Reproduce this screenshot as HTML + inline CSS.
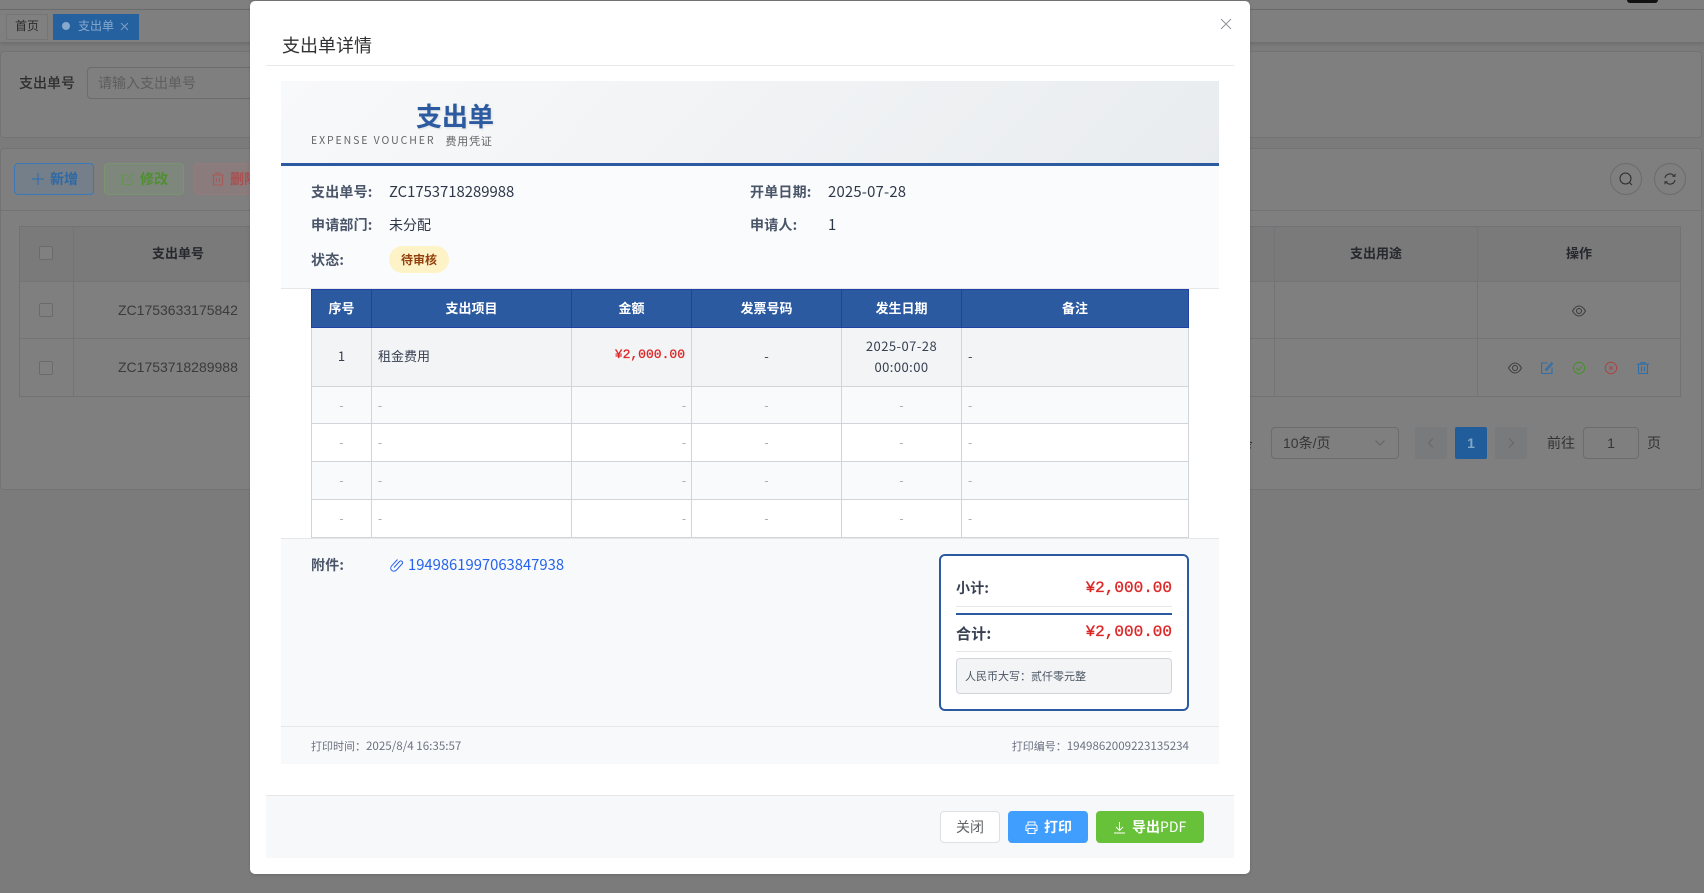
<!DOCTYPE html>
<html lang="zh">
<head>
<meta charset="utf-8">
<title>支出单详情</title>
<style>
*{box-sizing:border-box}
html,body{margin:0;padding:0;width:1704px;height:893px;overflow:hidden;background:#7b7b7b}
body{position:relative;font-family:"Liberation Sans","Noto Sans CJK SC",sans-serif;font-size:14px}
.a{position:absolute}
.t{position:absolute;white-space:nowrap}
.n{font-family:"Noto Sans CJK SC","Liberation Sans",sans-serif}
.c{font-family:"Noto Sans CJK TC",sans-serif}
.d{font-size:11.6px}
svg{position:absolute;display:block;overflow:visible;fill:none}
.card{position:absolute;background:#7f7f7f;border:1px solid #737373;border-radius:4px}
.bline{position:absolute;background:#747476}
.hc{color:#26282e;font-weight:bold;line-height:20px;text-align:center;font-family:"Noto Sans CJK SC",sans-serif;font-size:13px}
.cb{position:absolute;width:14px;height:14px;border:1px solid #6b6b6b;border-radius:2px;background:#808080}
.lb{position:absolute;white-space:nowrap;font:bold 14px/20px "Noto Sans CJK SC",sans-serif;color:#4a5568;letter-spacing:.2px}
.vl{position:absolute;white-space:nowrap;font:400 14px/20px "Noto Sans CJK SC",sans-serif;color:#2d3748}
table{position:absolute;left:311px;top:289px;border-collapse:collapse;table-layout:fixed;width:877px;font-family:"Noto Sans CJK SC",sans-serif}
th{background:#2b5aa0;color:#fff;font-size:13px;font-weight:bold;border:1px solid #2140a6;height:38px;padding:0 0 2px;line-height:18px}
td{border:1px solid #d1d5db;font-size:13px;color:#374151;text-align:center;padding:0 5px 3px;line-height:21px}
td.l{text-align:left;padding-left:6px}
td.r{text-align:right}
.e td{color:#9ca3af;height:38px;font-size:12px;padding-bottom:0}
.e.s td{height:37px}
.g{background:#f9fafb}
.w{background:#fff}
.btn{position:absolute;top:811px;height:32px;border-radius:4px;font:bold 14px/32px "Noto Sans CJK SC",sans-serif;color:#fff}
.amt{position:absolute;white-space:nowrap;font:400 16px/20px "Liberation Mono",monospace;color:#dc2626;right:532px;-webkit-text-stroke:.35px #dc2626}
</style>
</head>
<body>
<!-- background page -->
<div class="a" style="left:0;top:0;width:1704px;height:10px;background:#7f7f7f;border-bottom:1px solid #6d6d6d"></div>
<div class="a" style="left:1627px;top:0;width:31px;height:3px;background:#111;border-radius:0 0 12px 12px"></div>
<div class="a" style="left:0;top:10px;width:1704px;height:33px;background:#7f7f7f;border-bottom:1px solid #717171;box-shadow:0 1px 3px rgba(0,0,0,.12)"></div>
<div class="a" style="left:6px;top:14px;width:42px;height:26px;border:1px solid #757575;background:#808080"></div>
<div class="t n" style="left:15px;top:17px;font-size:12px;line-height:18px;color:#2b2b2b">首页</div>
<div class="a" style="left:53px;top:14px;width:86px;height:26px;background:#25609f"></div>
<div class="a" style="left:62px;top:22px;width:8px;height:8px;border-radius:50%;background:#86a9cc"></div>
<div class="t n" style="left:78px;top:17px;font-size:12px;line-height:18px;color:#86a9cc">支出单</div>
<svg style="left:120px;top:22px" width="9" height="9" stroke="#7fa0c4" stroke-width="1"><path d="M1 1l7 7M8 1l-7 7"/></svg>

<div class="card" style="left:0;top:51px;width:1702px;height:87px"></div>
<div class="t n" style="left:19px;top:73px;line-height:20px;font-weight:500;color:#2d2d2d">支出单号</div>
<div class="a" style="left:87px;top:67px;width:180px;height:32px;border:1px solid #6c6c6c;border-radius:4px"></div>
<div class="t n" style="left:98px;top:73px;line-height:20px;color:#5d5d5d">请输入支出单号</div>

<div class="card" style="left:0;top:148px;width:1702px;height:342px"></div>
<div class="a" style="left:0;top:210px;width:1702px;height:1px;background:#737373"></div>

<div class="a" style="left:14px;top:163px;width:80px;height:32px;border:1px solid #3a78ba;border-radius:4px;background:#747f89"></div>
<svg style="left:31px;top:172px" width="14" height="14" stroke="#3670ad" stroke-width="1.2"><path d="M7 1v12M1 7h12"/></svg>
<div class="t n" style="left:50px;top:169px;line-height:20px;font-weight:bold;color:#2f68a3">新增</div>
<div class="a" style="left:104px;top:163px;width:80px;height:32px;border:1px solid #7a9470;border-radius:4px;background:#7d877b"></div>
<svg style="left:121px;top:172px" width="14" height="14" stroke="#669352" stroke-width="1.1"><path d="M11 7.5V12.5H1.5V3H7M5.500 8.500L12.500 1.500"/></svg>
<div class="t n" style="left:140px;top:169px;line-height:20px;font-weight:bold;color:#4f8f30">修改</div>
<div class="a" style="left:194px;top:163px;width:80px;height:32px;border:1px solid #937c7c;border-radius:4px;background:#8a7c7c"></div>
<svg style="left:211px;top:172px" width="14" height="14" stroke="#a85a5a" stroke-width="1.1"><path d="M1 3h12M5 3V1h4v2M2.500 3v10h9V3M5.500 6v4M8.500 6v4"/></svg>
<div class="t n" style="left:230px;top:169px;line-height:20px;font-weight:bold;color:#a85050">删除</div>

<div class="a" style="left:1610px;top:163px;width:32px;height:32px;border:1px solid #6c6c6c;border-radius:50%"></div>
<svg style="left:1619px;top:172px" width="14" height="14" stroke="#2b2b2b" stroke-width="1"><circle cx="6.500" cy="6.500" r="5.500"/><path d="M10.500 10.500L13 13"/></svg>
<div class="a" style="left:1654px;top:163px;width:32px;height:32px;border:1px solid #6c6c6c;border-radius:50%"></div>
<svg style="left:1664px;top:173px" width="12" height="12" stroke="#2b2b2b" stroke-width="1"><path d="M1 5A5 5 0 0 1 10 3M11 7A5 5 0 0 1 2 9M8.500 3.200H11V.8M3.500 8.800H1v2.400"/></svg>

<!-- background table -->
<div class="a" style="left:19px;top:226px;width:1662px;height:56px;background:#7a7a7a"></div>
<div class="a" style="left:19px;top:226px;width:1662px;height:171px;border:1px solid #717176"></div>
<div class="bline" style="left:19px;top:281px;width:1662px;height:1px"></div>
<div class="bline" style="left:19px;top:338px;width:1662px;height:1px"></div>
<div class="bline" style="left:73px;top:226px;width:1px;height:171px"></div>
<div class="bline" style="left:1274px;top:226px;width:1px;height:171px"></div>
<div class="bline" style="left:1477px;top:226px;width:1px;height:171px"></div>
<div class="cb" style="left:39px;top:246px"></div>
<div class="cb" style="left:39px;top:303px"></div>
<div class="cb" style="left:39px;top:361px"></div>
<div class="t hc" style="left:138px;top:243px;width:80px">支出单号</div>
<div class="t hc" style="left:1336px;top:243px;width:80px">支出用途</div>
<div class="t hc" style="left:1539px;top:243px;width:80px">操作</div>
<div class="t" style="left:118px;top:300px;line-height:20px;color:#3b3b3b">ZC1753633175842</div>
<div class="t" style="left:118px;top:357px;line-height:20px;color:#3b3b3b">ZC1753718289988</div>
<svg style="left:1572px;top:305px" width="14" height="12" stroke="#3c3c3c" stroke-width="1"><path d="M.5 6C2.500 2.500 5 1 7 1s4.500 1.500 6.500 5C11.500 9.500 9 11 7 11S2.500 9.500.5 6z"/><circle cx="7" cy="6" r="2.500"/></svg>
<svg style="left:1508px;top:362px" width="14" height="12" stroke="#3c3c3c" stroke-width="1"><path d="M.5 6C2.500 2.500 5 1 7 1s4.500 1.500 6.500 5C11.500 9.500 9 11 7 11S2.500 9.500.5 6z"/><circle cx="7" cy="6" r="2.500"/></svg>
<svg style="left:1541px;top:362px" width="12" height="12" stroke="#2e6eaa" stroke-width="1.100"><path d="M6.500 1H.6v10.500H11V5.500M4.500 7.500L10.500.8l1 1L5.500 8.500z"/></svg>
<svg style="left:1573px;top:362px" width="12" height="12" stroke="#48912c" stroke-width="1.100"><circle cx="6" cy="6" r="5.700"/><path d="M3 6l2.200 2.200L9 4.300"/></svg>
<svg style="left:1605px;top:362px" width="12" height="12" stroke="#a84646" stroke-width="1"><circle cx="6" cy="6" r="5.700"/><path d="M4.200 4.200l3.600 3.600M7.800 4.200L4.200 7.800"/></svg>
<svg style="left:1637px;top:362px" width="12" height="12" stroke="#2e6eaa" stroke-width="1.100"><path d="M0 2.200h12M4 2V.5h4V2M1.500 2.200V11.500h9V2.200M4.500 4.500V9.500M7.500 4.500V9.500"/></svg>

<!-- pagination -->
<div class="t n" style="left:1211px;top:433px;line-height:20px;color:#333">共 2 条</div>
<div class="a" style="left:1271px;top:427px;width:128px;height:32px;border:1px solid #6c6c6c;border-radius:4px"></div>
<div class="t" style="left:1283px;top:433px;line-height:20px;color:#363636">10条/页</div>
<svg style="left:1375px;top:440px" width="10" height="6" stroke="#636363" stroke-width="1"><path d="M.5.500L5 5 9.500.500"/></svg>
<div class="a" style="left:1415px;top:427px;width:32px;height:32px;background:#787a7c;border-radius:2px"></div>
<svg style="left:1428px;top:438px" width="6" height="10" stroke="#666" stroke-width="1"><path d="M5 .5L.5 5 5 9.500"/></svg>
<div class="a" style="left:1455px;top:427px;width:32px;height:32px;background:#205d9a;border-radius:2px"></div>
<div class="t" style="left:1455px;top:433px;width:32px;text-align:center;line-height:20px;font-weight:bold;color:#7fa8c8">1</div>
<div class="a" style="left:1495px;top:427px;width:32px;height:32px;background:#787a7c;border-radius:2px"></div>
<svg style="left:1508px;top:438px" width="6" height="10" stroke="#666" stroke-width="1"><path d="M1 .5L5.500 5 1 9.500"/></svg>
<div class="t n" style="left:1547px;top:433px;line-height:20px;color:#333">前往</div>
<div class="a" style="left:1583px;top:427px;width:56px;height:32px;border:1px solid #6c6c6c;border-radius:4px"></div>
<div class="t" style="left:1583px;top:433px;width:56px;text-align:center;line-height:20px;color:#363636">1</div>
<div class="t n" style="left:1647px;top:433px;line-height:20px;color:#333">页</div>

<!-- modal -->
<div class="a" style="left:250px;top:0;width:1000px;height:1px;background:#757575"></div>
<div class="a" style="left:250px;top:1px;width:1000px;height:873px;background:#fff;border-radius:5px;box-shadow:0 1px 3px rgba(0,0,0,.15)"></div>
<div class="t n" style="left:282px;top:33px;font-size:18px;line-height:24px;color:#303133">支出单详情</div>
<svg style="left:1221px;top:19px" width="10" height="10" stroke="#909399" stroke-width="1"><path d="M0 0l10 10M10 0L0 10"/></svg>
<div class="a" style="left:266px;top:65px;width:968px;height:1px;background:#e8eaed"></div>

<div class="a" style="left:281px;top:81px;width:938px;height:82px;background:linear-gradient(135deg,#f8f9fa 0%,#e9ecef 100%)"></div>
<div class="a" style="left:281px;top:163px;width:938px;height:3px;background:#2b5aa0"></div>
<div class="a" style="left:281px;top:166px;width:938px;height:122px;background:#fafbfd"></div>
<div class="a" style="left:281px;top:288px;width:938px;height:1px;background:#e5e7eb"></div>

<div class="t n" style="left:416px;top:98px;font-size:26px;line-height:36px;font-weight:bold;color:#2b5aa0;text-shadow:1px 1px 2px rgba(0,0,0,.1)">支出单</div>
<div class="t n" style="left:311px;top:133px;font-size:10.500px;line-height:16px;letter-spacing:1.900px;color:#666">EXPENSE VOUCHER</div>
<div class="t n" style="left:445.500px;top:133px;font-size:11px;line-height:16px;letter-spacing:.8px;color:#666">费用凭证</div>

<div class="lb" style="left:311px;top:182px">支出单号:</div>
<div class="vl" style="left:389px;top:182px;font-size:14.850px">ZC1753718289988</div>
<div class="lb" style="left:311px;top:215px">申请部门:</div>
<div class="vl" style="left:389px;top:215px">未分配</div>
<div class="lb" style="left:311px;top:250px">状态:</div>
<div class="a" style="left:389px;top:246px;width:60px;height:27px;border-radius:14px;background:#fef3c7"></div>
<div class="t n" style="left:389px;top:250px;width:60px;text-align:center;font-size:12px;line-height:19px;font-weight:bold;color:#92400e">待审核</div>
<div class="lb" style="left:750px;top:182px">开单日期:</div>
<div class="vl" style="left:828px;top:182px;font-size:14.850px;letter-spacing:.2px">2025-07-28</div>
<div class="lb" style="left:750px;top:215px">申请人:</div>
<div class="vl" style="left:828px;top:215px;font-size:14.850px">1</div>

<table>
<colgroup><col style="width:60px"><col style="width:200px"><col style="width:120px"><col style="width:150px"><col style="width:120px"><col style="width:227px"></colgroup>
<tr><th>序号</th><th>支出项目</th><th>金额</th><th>发票号码</th><th>发生日期</th><th>备注</th></tr>
<tr style="background:#f3f4f6"><td style="height:59px">1</td><td class="l">租金费用</td><td class="r" style="font:400 13px/21px 'Liberation Mono',monospace;color:#dc2626;-webkit-text-stroke:.3px #dc2626;padding:0 6px 5px 0">¥2,000.00</td><td>-</td><td style="letter-spacing:.45px;padding-bottom:2px">2025-07-28<br>00:00:00</td><td class="l">-</td></tr>
<tr class="e g s"><td>-</td><td class="l">-</td><td class="r">-</td><td>-</td><td>-</td><td class="l">-</td></tr>
<tr class="e w"><td>-</td><td class="l">-</td><td class="r">-</td><td>-</td><td>-</td><td class="l">-</td></tr>
<tr class="e g"><td>-</td><td class="l">-</td><td class="r">-</td><td>-</td><td>-</td><td class="l">-</td></tr>
<tr class="e w"><td>-</td><td class="l">-</td><td class="r">-</td><td>-</td><td>-</td><td class="l">-</td></tr>
</table>

<div class="a" style="left:281px;top:538px;width:938px;height:226px;background:#f8f9fb;border-top:1px solid #e5e7eb"></div>
<div class="a" style="left:281px;top:726px;width:938px;height:1px;background:#e5e7eb"></div>
<div class="lb" style="left:311px;top:555px">附件:</div>
<svg style="left:390px;top:558px" width="13" height="13" stroke="#2563eb" stroke-width="1"><path d="M4 9.500l5.500-6c.8-.9 2-.7 2.600 0 .6.7.6 1.700 0 2.400L6.500 12c-1.500 1.500-3.800 1.500-5 .2-1.100-1.300-1-3.200.3-4.500L7.500 1.500"/></svg>
<div class="t n" style="left:408px;top:554px;font-size:14.800px;line-height:21px;color:#2563eb">1949861997063847938</div>

<div class="a" style="left:939px;top:554px;width:250px;height:157px;background:#fff;border:2px solid #2b5aa0;border-radius:6px"></div>
<div class="lb" style="left:956px;top:578px;color:#374151">小计:</div>
<div class="amt" style="top:578px">¥2,000.00</div>
<div class="a" style="left:956px;top:606px;width:216px;height:1px;background:#e5e7eb"></div>
<div class="a" style="left:956px;top:613px;width:216px;height:2px;background:#2b5aa0"></div>
<div class="lb" style="left:956px;top:624px;font-size:15px;color:#374151">合计:</div>
<div class="amt" style="top:622px">¥2,000.00</div>
<div class="a" style="left:956px;top:651px;width:216px;height:1px;background:#e5e7eb"></div>
<div class="a" style="left:956px;top:658px;width:216px;height:36px;background:#f3f4f6;border:1px solid #d1d5db;border-radius:4px"></div>
<div class="t n" style="left:965px;top:668px;font-size:11px;line-height:16px;color:#4b5563">人民币大写<span class="c">：</span>贰仟零元整</div>

<div class="t n" style="left:311px;top:738px;font-size:11px;line-height:16px;color:#6b7280">打印时间<span class="c">：</span><span class="d">2025/8/4 16:35:57</span></div>
<div class="t n" style="right:515px;top:738px;font-size:11px;line-height:16px;color:#6b7280">打印编号<span class="c">：</span><span class="d">1949862009223135234</span></div>

<div class="a" style="left:266px;top:795px;width:968px;height:63px;background:#f7f8fa;border-top:1px solid #e5e7eb"></div>
<div class="btn" style="left:940px;width:60px;background:#fff;border:1px solid #dcdfe6;color:#606266;font-weight:400;text-align:center;line-height:30px">关闭</div>
<div class="btn" style="left:1008px;width:80px;background:#409eff"></div>
<svg style="left:1025px;top:821px" width="13" height="13" stroke="#fff" stroke-width="1"><path d="M3 4V1h7v3M3 9.500H1V5.500a1.500 1.500 0 0 1 1.500-1.500h8A1.500 1.500 0 0 1 12 5.500v4h-2M3 7.500h7v5H3z"/></svg>
<div class="t n" style="left:1044px;top:817px;font-weight:bold;line-height:20px;color:#fff">打印</div>
<div class="btn" style="left:1096px;width:108px;background:#67c23a"></div>
<svg style="left:1113px;top:821px" width="13" height="13" stroke="#fff" stroke-width="1"><path d="M6.500 1v8M3 6l3.500 3.500L10 6M1 12h11"/></svg>
<div class="t n" style="left:1132px;top:817px;line-height:20px;color:#fff"><b>导出</b>PDF</div>
</body>
</html>
